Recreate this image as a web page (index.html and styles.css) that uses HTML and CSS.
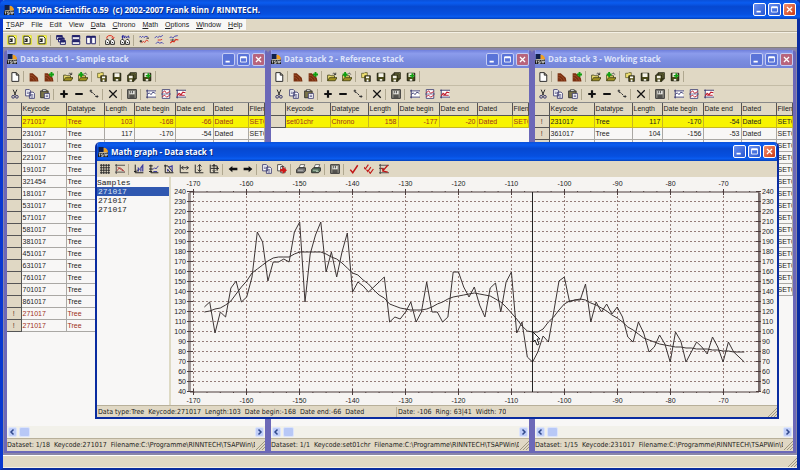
FILE: index.html
```html
<!DOCTYPE html>
<html lang="en">
<head>
<meta charset="UTF-8">
<meta name="viewport" content="width=device-width, initial-scale=1.0">
<title>TSAPWin Scientific 0.59</title>
<link rel="stylesheet" href="styles.css">
</head>
<body>

<!-- ICONS -->
<svg class="sprite" aria-hidden="true">
  <symbol id="i-app" viewBox="0 0 16 16"><path fill="#10204a" d="M1 0h8v8H1z"/><path fill="#f0a020" d="M9 1a7 7 0 0 1 7 7v1H9z"/><path fill="#f4e8c0" d="M2 8h12v2H2z"/><path fill="#181818" d="M0 9h16v7H0z"/><path stroke="#fff" d="M1 11h3M2.5 11v4M8 11H5.500v2H8v2H5M9.500 15v-4H12v4M13.500 15v-4H15v2h-1"  fill="none"/></symbol>
  <symbol id="i-page" viewBox="0 0 16 16"><path fill="#ffff60" stroke="#d8d800" d="M1 1h14v14H1z"/><path fill="#fffff0" stroke="#222" stroke-width="1.5" d="M3 2h7l3 3v9H3z"/><path stroke="#222" stroke-width="2" fill="none" d="M5 6l3 3M8 5v5H4"/></symbol>
  <symbol id="i-cascade" viewBox="0 0 16 16"><g fill="#fff" stroke="#20206a" stroke-width="1.500"><path d="M1 1h9v6H1zM4 5h9v6H4zM7 9h8v6H7z"/></g><path stroke="#20206a" stroke-width="3" d="M1 2h9M4 6h9M7 10h8"/></symbol>
  <symbol id="i-tileh" viewBox="0 0 16 16"><path fill="#fff" stroke="#20206a" stroke-width="1.500" d="M2 1h12v6H2zM2 9h12v6H2z"/><path stroke="#20206a" stroke-width="3" d="M2 2h12M2 10h12"/></symbol>
  <symbol id="i-tilev" viewBox="0 0 16 16"><path fill="#fff" stroke="#20206a" stroke-width="1.500" d="M1 2h6v12H1zM9 2h6v12H9z"/><path stroke="#20206a" stroke-width="3" d="M1 3h14"/></symbol>
  <symbol id="i-find" viewBox="0 0 16 16"><path fill="none" stroke="#e03020" stroke-width="1.500" d="M3 6V3l3-2h4l3 2v3M11 4l2 2 2-2"/><path fill="#fff" stroke="#222" stroke-width="1.500" d="M1 15V9l2-2h2l2 3v5zM9 15V9l2-2h2l2 3v5z"/><path stroke="#222" stroke-width="1.500" d="M3 11l2 2M11 11l2 2"/></symbol>
  <symbol id="i-findfx" viewBox="0 0 16 16"><path fill="none" stroke="#20209a" stroke-width="1.500" d="M4 6V1h2M2.500 3h4M8 1L7 5M9 2l3 3M12 2L9 5M13.500 1l1 4"/><path fill="#fff" stroke="#222" stroke-width="1.500" d="M1 15V9l2-2h2l2 3v5zM9 15V9l2-2h2l2 3v5z"/><path stroke="#222" stroke-width="1.500" d="M3 11l2 2M11 11l2 2"/></symbol>
  <symbol id="i-curve1" viewBox="0 0 16 16"><path fill="none" stroke="#4040b0" stroke-width="1.500" d="M0 4l2-2 2 2 2-2 2 2 3-2 3 1"/><path fill="none" stroke="#e03020" stroke-width="1.500" d="M4 13l3-3 2 2 3-4 3 2"/><path stroke="#222" stroke-width="1.500" d="M1 10h4M3 8v4M12 5h4"/></symbol>
  <symbol id="i-curve2" viewBox="0 0 16 16"><path fill="none" stroke="#4040b0" stroke-width="1.500" d="M1 5l3-3 2 2 3-2 2 1 3-3M3 14l3-3 3 2 4-1 2 2"/><path stroke="#e03020" stroke-width="1.500" fill="none" d="M6 8h4l3-1"/></symbol>
  <symbol id="i-curve3" viewBox="0 0 16 16"><path fill="none" stroke="#4040b0" stroke-width="1.500" d="M1 4l3-1 2 2 3-3 5-1"/><path fill="none" stroke="#e03020" stroke-width="1.800" d="M2 13l3-3 3 1 3-4 4 1"/><path stroke="#222" d="M2 8h7M6 6v4"/></symbol>
  <symbol id="i-new" viewBox="0 0 16 16"><path fill="#fff" stroke="#222" stroke-width="1.500" d="M3 1h7l4 4v10H3zM10 1v4h4"/></symbol>
  <symbol id="i-wood" viewBox="0 0 16 16"><path fill="#7a3010" d="M1 2h5l8 7 1 5v1H1z"/><path fill="none" stroke="#b06038" d="M2 5c5 0 9 4 10 9M2 9c3 0 5 2 6 5"/></symbol>
  <symbol id="i-woodadd" viewBox="0 0 16 16"><path fill="#7a3010" d="M1 2h5l8 7 1 5v1H1z"/><path fill="none" stroke="#b06038" d="M2 5c5 0 9 4 10 9M2 9c3 0 5 2 6 5"/><path stroke="#10a010" stroke-width="3" d="M8 4h8M12 0v8"/></symbol>
  <symbol id="i-open" viewBox="0 0 16 16"><path fill="#f0e070" stroke="#33330a" stroke-width="1.200" d="M1 14V5h4l1 1h6v3"/><path fill="#a09020" stroke="#33330a" stroke-width="1.200" d="M1 14l3-5h12l-3 5z"/><path fill="none" stroke="#222" stroke-width="1.200" d="M9 3c2-2 3-1 5 1M14 1v3h-3"/></symbol>
  <symbol id="i-openadd" viewBox="0 0 16 16"><path fill="#f0e070" stroke="#33330a" stroke-width="1.200" d="M1 14V5h4l1 1h6v3"/><path fill="#a09020" stroke="#33330a" stroke-width="1.200" d="M1 14l3-5h12l-3 5z"/><path stroke="#10a010" stroke-width="3" d="M1 4h8M5 0v8"/><path fill="none" stroke="#222" stroke-width="1.200" d="M10 3c2-2 3-1 4 1"/></symbol>
  <symbol id="i-opensave" viewBox="0 0 16 16"><path fill="#f0e070" stroke="#444410" d="M1 9V2h4l1-1h4v8z"/><path fill="#555010" stroke="#222" stroke-width="1.200" d="M6 6h9v9H6z"/><path fill="#fff" d="M8 7h5v3H8zM9 12h3v3H9z"/></symbol>
  <symbol id="i-save" viewBox="0 0 16 16"><path fill="#4a4a18" stroke="#181808" stroke-width="1.500" d="M2 2h12v12H2z"/><path fill="#f4f2e8" d="M4 2h8v6H4zM6 11h4v3H6z"/></symbol>
  <symbol id="i-saveall" viewBox="0 0 16 16"><path fill="#8a8a50" stroke="#181808" stroke-width="1.200" d="M5 1h10v10H5zM3 3h10v10H3z"/><path fill="#4a4a18" stroke="#181808" stroke-width="1.200" d="M1 5h10v10H1z"/><path fill="#f4f2e8" d="M3 6h6v4H3zM4 12h4v3H4z"/></symbol>
  <symbol id="i-saveadd" viewBox="0 0 16 16"><path fill="#4a4a18" stroke="#181808" stroke-width="1.500" d="M2 2h12v12H2z"/><path fill="#f4f2e8" d="M4 2h8v6H4zM6 11h4v3H6z"/><path stroke="#10a010" stroke-width="2.500" d="M6 6h8M10 2v8"/></symbol>
  <symbol id="i-cut" viewBox="0 0 16 16"><path fill="none" stroke="#222" stroke-width="1.500" d="M5 1l4 9M11 1L7 10"/><g fill="none" stroke="#30306a" stroke-width="1.500"><circle cx="5" cy="12.500" r="2.200"/><circle cx="11" cy="12.500" r="2.200"/></g></symbol>
  <symbol id="i-copy" viewBox="0 0 16 16"><path fill="#fff" stroke="#30306a" stroke-width="1.300" d="M1 1h6l2 2v8H1zM7 5h6l2 2v8H7z"/><path stroke="#30306a" d="M3 5h3M3 7h3M9 9h4M9 11h4M9 13h4"/></symbol>
  <symbol id="i-paste" viewBox="0 0 16 16"><path fill="#7a7448" stroke="#222" stroke-width="1.300" d="M1 3h12v11H1z"/><path fill="#ddd" stroke="#222" d="M4 1h6v3H4z"/><path fill="#fff" stroke="#30306a" stroke-width="1.200" d="M7 7h8v8H7z"/><path stroke="#30306a" d="M9 10h4M9 12h4"/></symbol>
  <symbol id="i-plus" viewBox="0 0 16 16"><path stroke="#111" stroke-width="3.500" d="M2 8h12M8 2v12"/></symbol>
  <symbol id="i-minus" viewBox="0 0 16 16"><path stroke="#111" stroke-width="3.500" d="M2 8h12"/></symbol>
  <symbol id="i-scatter" viewBox="0 0 16 16"><path fill="none" stroke="#333" stroke-width="1.600" d="M1 3h4M3 1v4l3 1M7 7l3 3M10 12h5M13 10v4"/></symbol>
  <symbol id="i-del" viewBox="0 0 16 16"><path stroke="#111" stroke-width="2" d="M2 2l12 12M14 2L2 14"/></symbol>
  <symbol id="i-report" viewBox="0 0 16 16"><path fill="#8a8880" stroke="#333" stroke-width="1.500" d="M1 1h14v14H1z"/><path fill="#f4f4f0" d="M4 3h8v5H4z"/><path stroke="#222" stroke-width="1.300" d="M6 3v4M9 3v4M4 11h8M4 13h8"/></symbol>
  <symbol id="i-graph1" viewBox="0 0 16 16"><path fill="#fff" stroke="none" d="M2 2h13v12H2z"/><path fill="none" stroke="#30306a" stroke-width="1.400" d="M2 1v14M0 3h16M0 13h16M2 9l3-3 3 3 3-4 4 2"/></symbol>
  <symbol id="i-graph2" viewBox="0 0 16 16"><path fill="#fff" stroke="#30306a" stroke-width="1.300" d="M2 1h12v14H2z"/><path fill="none" stroke="#c02030" stroke-width="1.500" d="M2 6l4-3 3 4 5-3M2 12l4-2 3 3 5-3"/><path stroke="#30306a" d="M0 8h16"/></symbol>
  <symbol id="i-graph3" viewBox="0 0 16 16"><path fill="#fff" d="M2 2h13v12H2z"/><path fill="none" stroke="#30306a" stroke-width="1.400" d="M2 1v14M0 2h16M0 13h16"/><path fill="none" stroke="#c02030" stroke-width="1.800" d="M2 11l3-4 3 2 3-4 4 1M5 10h9"/></symbol>
  <symbol id="i-grid" viewBox="0 0 16 16"><path stroke="#222" stroke-width="1.400" d="M2 0v16M6 0v16M10 0v16M14 0v16M0 2h16M0 6h16M0 10h16M0 14h16"/></symbol>
  <symbol id="i-cross" viewBox="0 0 16 16"><path stroke="#444" stroke-width="1.400" d="M2 0v16M0 2h16M0 13h16"/><path fill="none" stroke="#b04040" stroke-width="1.500" d="M3 11l4-5 3 1 5 5M4 5l9 6"/></symbol>
  <symbol id="i-bar1" viewBox="0 0 16 16"><path fill="none" stroke="#222" stroke-width="1.600" d="M2 1v13h13M0 12h4M5 12V9"/><path fill="none" stroke="#4040a0" stroke-width="2" d="M7 12V7l2 2M11 12V6l3-4v10"/></symbol>
  <symbol id="i-bar2" viewBox="0 0 16 16"><path fill="none" stroke="#222" stroke-width="1.600" d="M3 1v13h12M0 3h6M0 8h6M0 12h5"/><path fill="none" stroke="#4040a0" stroke-width="1.600" d="M6 9l3-3 2 2 4-5M7 12h6"/></symbol>
  <symbol id="i-bar3" viewBox="0 0 16 16"><path fill="none" stroke="#222" stroke-width="1.600" d="M2 1v13h13M0 3h6l8 10M5 8l5 5"/><path fill="none" stroke="#4040a0" stroke-width="2" d="M8 5l5-2v9M6 12V8"/></symbol>
  <symbol id="i-width" viewBox="0 0 16 16"><path fill="none" stroke="#222" stroke-width="1.500" d="M2 1v13h13M4 6h11M7 3L4 6l3 3M12 3l3 3-3 3"/></symbol>
  <symbol id="i-height" viewBox="0 0 16 16"><path fill="none" stroke="#222" stroke-width="1.500" d="M2 1v13h13M9 1v11M6 4l3-3 3 3M6 9l3 3 3-3"/></symbol>
  <symbol id="i-move" viewBox="0 0 16 16"><path fill="none" stroke="#222" stroke-width="1.500" d="M2 1v13h13M8 0v14M3 7h12M6 3l2-2 2 2M13 5l2 2-2 2M6 10l2 2 2-2M4 3h9v8"/></symbol>
  <symbol id="i-left" viewBox="0 0 16 16"><path fill="#111" d="M1 8l6-5v3h8v4H7v3z"/></symbol>
  <symbol id="i-right" viewBox="0 0 16 16"><path fill="#111" d="M15 8L9 3v3H1v4h8v3z"/></symbol>
  <symbol id="i-export" viewBox="0 0 16 16"><path fill="#fff" stroke="#333" stroke-width="1.300" d="M1 1h6l2 2v8H1zM6 4h5l2 2v8H6z"/><path fill="#d01818" d="M5 8h4V4l7 6-7 6v-4H5z"/></symbol>
  <symbol id="i-print" viewBox="0 0 16 16"><path fill="#fff" stroke="#222" d="M5 6l2-5h7l-2 5z"/><path fill="#777" stroke="#222" stroke-width="1.400" d="M1 9l3-3h11v5l-3 3H1z"/><path stroke="#ddd" d="M3 10h8"/></symbol>
  <symbol id="i-print2" viewBox="0 0 16 16"><path fill="#fff" stroke="#222" d="M5 6l2-5h7l-2 5z"/><path fill="#57705c" stroke="#222" stroke-width="1.400" d="M1 9l3-3h11v5l-3 3H1z"/><path stroke="#e0f0e0" d="M3 10h8M8 12h4"/></symbol>
  <symbol id="i-check" viewBox="0 0 16 16"><path fill="none" stroke="#c01818" stroke-width="2.400" d="M2 9l4 5 8-12"/></symbol>
  <symbol id="i-checks" viewBox="0 0 16 16"><path fill="none" stroke="#c01818" stroke-width="1.800" d="M0 5l2 3 5-7M4 9l2 3 5-7M8 12l2 3 5-7"/></symbol>
  <symbol id="i-checkgraph" viewBox="0 0 16 16"><path fill="none" stroke="#444" stroke-width="1.400" d="M2 0v16M0 2h16M0 7h8M0 14h16"/><path fill="none" stroke="#c01818" stroke-width="2" d="M4 6l3 4 7-8M5 11l9 2"/></symbol>
  <symbol id="i-min" viewBox="0 0 13 13"><path fill="#fff" d="M3 8h5v2H3z"/></symbol>
  <symbol id="i-max" viewBox="0 0 13 13"><path fill="none" stroke="#fff" d="M3 3.500h7v6H3z"/><path fill="#fff" d="M3 3h7v2H3z"/></symbol>
  <symbol id="i-close" viewBox="0 0 13 13"><path stroke="#fff" stroke-width="1.500" d="M3.500 3.500l6 6M9.500 3.500l-6 6"/></symbol>
  <symbol id="i-grip" viewBox="0 0 10 10"><path stroke="#a09880" d="M1 10l9-9M4 10l6-6M7 10l3-3"/></symbol>
</svg>

<div class="app">
  <header class="titlebar">
    <svg class="icon"><use href="#i-app"/></svg>
    <h1>TSAPWin Scientific 0.59  (c) 2002-2007 Frank Rinn / RINNTECH.</h1>
    <div class="win-btns">
      <button aria-label="Minimize"><svg><use href="#i-min"/></svg></button>
      <button aria-label="Maximize"><svg><use href="#i-max"/></svg></button>
      <button class="close" aria-label="Close"><svg><use href="#i-close"/></svg></button>
    </div>
  </header>

  <div class="menubar">
    <nav>
      <button><u>T</u>SAP</button>
      <button>File</button>
      <button>Edit</button>
      <button>View</button>
      <button><u>D</u>ata</button>
      <button><u>C</u>hrono</button>
      <button><u>M</u>ath</button>
      <button><u>O</u>ptions</button>
      <button><u>W</u>indow</button>
      <button><u>H</u>elp</button>
    </nav>
  </div>

  <div class="toolbar main-tools" data-icons="page page page | cascade tileh tilev | find findfx | curve1 curve2 curve3"></div>

  <main class="mdi">
    <div class="stacks" id="stacks"></div>

    <!-- MATH GRAPH -->
    <section class="graph">
      <header class="titlebar">
        <svg class="icon"><use href="#i-app"/></svg>
        <h2>Math graph - Data stack 1</h2>
        <div class="win-btns">
          <button aria-label="Minimize"><svg><use href="#i-min"/></svg></button>
          <button aria-label="Maximize"><svg><use href="#i-max"/></svg></button>
          <button class="close" aria-label="Close"><svg><use href="#i-close"/></svg></button>
        </div>
      </header>
      <div class="toolbar" data-icons="grid cross | bar1 bar2 bar3 width height move | left right | copy export | print print2 | report | check checks checkgraph"></div>
      <div class="graph-body">
        <div class="samples">
          <h3>Samples</h3>
          <ul role="listbox" aria-label="Samples">
            <li role="option" aria-selected="true" class="active">271017</li>
            <li role="option" aria-selected="false">271017</li>
            <li role="option" aria-selected="false">271017</li>
          </ul>
        </div>
        <svg class="chart" id="chart" viewBox="0 0 606 228"></svg>
      </div>
      <footer class="statusbar">
        <span class="status-data">Data type:Tree  Keycode:271017  Length:103  Date begin:-168  Date end:-66  Dated</span>
        <span class="status-pos">Date: -106  Ring: 63|41  Width: 70</span>
        <svg class="grip"><use href="#i-grip"/></svg>
      </footer>
    </section>
  </main>

  <footer class="app-status"><svg class="grip"><use href="#i-grip"/></svg></footer>
</div>

<script src="script.js"></script>
</body>
</html>
```

FILE: styles.css
```css
:root { --beige:#e0d8c4; --blue-dark:#0a2ca0; --child-border:#6c68b8; --paper:#f8f7f6; --ui:'DejaVu Sans Condensed','Liberation Sans',sans-serif; --cell:'Liberation Sans',sans-serif; }
* { margin:0; padding:0; box-sizing:border-box; }
body { font-family:var(--ui); font-size:7px; color:#222; background:var(--blue-dark); }
button { font:inherit; color:inherit; background:none; border:none; }
.sprite { display:none; }
.icon { width:10px; height:10px; display:block; flex:none; }

/* MAIN WINDOW */
.app { min-height:100vh; display:flex; flex-direction:column; border:3px solid var(--blue-dark); border-top:none; border-bottom-width:2px; border-left-color:#0838d0; background:var(--beige); }
.titlebar { display:flex; align-items:center; gap:3px; height:19px; padding:0 1px; background:linear-gradient(#0a50d8,#0a5cf0 15%,#0648d0 35%,#0650e0 75%,#0a5cf0 88%,#0440b8); color:#fff; }
.titlebar h1,.titlebar h2 { flex:1; font-family:'Open Sans',sans-serif; font-weight:700; font-size:8px; line-height:12px; white-space:pre; overflow:hidden; text-shadow:1px 1px 0 #0a2a80; }
.win-btns { display:flex; gap:2px; }
.win-btns button { width:13px; height:13px; border:1px solid #fff; border-radius:2px; background:linear-gradient(135deg,#6a90f0,#2455d0); }
.win-btns svg { display:block; width:11px; height:11px; }
.win-btns .close { background:linear-gradient(135deg,#f09070,#cc3a14); }
.app > .titlebar { margin:0 -3px; padding:0 4px; border-radius:5px 5px 0 0; }

.menubar { height:13px; border-bottom:1px solid #b4ac98; }
.menubar nav { display:inline-flex; gap:1px; height:11px; background:var(--paper); padding-right:1px; font-family:var(--cell); }
.menubar button { padding:0 3px; line-height:11px; }

.toolbar { display:flex; align-items:center; height:17px; background:var(--beige); }
.toolbar button { width:15px; height:15px; display:flex; align-items:center; justify-content:center; }
.toolbar .sep { width:1px; height:11px; margin:0 2px 0 1px; background:#b0a890; }
.main-tools { height:15px; padding-left:1px; border-top:1px solid #f4f0e4; }

.mdi { flex:1; display:flex; position:relative; border-top:1px solid #85817c; background:#8a86a8; padding:2px 1px; }
.stacks { flex:1; min-width:0; display:flex; }
.app-status { display:flex; justify-content:flex-end; align-items:flex-end; height:13px; border-top:1px solid #fff; border-bottom:1px solid #f4f0e4; }
.grip { width:10px; height:10px; display:block; flex:none; margin-left:auto; }

/* DATA STACKS */
.stack { flex:1 1 0; min-width:0; display:flex; flex-direction:column; border:3px solid var(--child-border); border-top:none; border-bottom-width:2px; border-radius:4px 4px 0 0; background:var(--paper); overflow:hidden; }
.stack .titlebar { height:18px; margin:0 -3px; padding:0 3px; background:linear-gradient(#7080dc,#8c9cec 20%,#7a8cdf 60%,#7484d8); color:#dde3fa; }
.stack .titlebar h2 { text-shadow:none; }
.stack .win-btns button { border-color:#c4ccf4; background:#5a74d8; }
.stack .win-btns .close { background:#b8647c; }
.stack .toolbar + .toolbar { border-top:1px solid #c4bca6; }
.table-wrap { flex:1; overflow:hidden; border-top:1px solid #888; }
.data-table { width:100%; border-collapse:collapse; table-layout:fixed; font-family:var(--cell); font-size:7px; line-height:11px; }
.data-table th,.data-table td { height:12px; border:1px solid #aaa8a4; border-left:none; border-top:none; padding:0 1px; text-align:left; font-weight:400; white-space:nowrap; overflow:hidden; }
.data-table th { background:var(--beige); border-color:#555; color:#222; }
.data-table td.mark { background:var(--beige); border-color:#555; text-align:center; color:#5a3018; }
.data-table td.num { text-align:right; }
.data-table tr.sel td:not(.mark) { background:#f8f400; border-color:#c8b820; }
.data-table tr.red td:not(.mark) { color:#a03020; }
.c-mark { width:14px; }
.c-key { width:45px; }
.c-type { width:38px; }
.c-len { width:30px; }
.c-begin { width:41px; }
.c-end { width:38px; }
.c-dated { width:35px; }

.scroll { display:flex; align-items:center; gap:2px; height:12px; padding:0 1px; background:#f2f1ea; }
.scroll button { width:9px; height:10px; border:1px solid #dce4fc; border-radius:2px; background:#c0cef8; }
.scroll button svg { display:block; width:7px; height:8px; }
.scroll .thumb { width:11px; height:10px; border:1px solid #dce4fc; border-radius:2px; background:#b8c8f6; }
.scroll button:last-child { margin-left:auto; }
.statusbar { display:flex; align-items:center; height:13px; border-top:1px solid #b8b09a; background:var(--beige); line-height:10px; white-space:pre; overflow:hidden; }
.statusbar span { overflow:hidden; }
.stack .statusbar span { flex:1; }

/* MATH GRAPH */
.graph { position:absolute; top:94px; left:92px; right:18px; border:2px solid var(--blue-dark); border-top:none; border-radius:5px 5px 0 0; background:var(--paper); overflow:hidden; }
.graph .titlebar { margin:0 -2px; padding:0 3px; }
.graph .toolbar { height:16px; }
.graph-body { display:flex; background:#f6f4f2; }
.samples { width:74px; flex:none; border-right:2px solid #dedac4; background:var(--paper); font-family:'Liberation Mono',monospace; font-size:8px; line-height:9px; padding-top:1px; }
.samples h3 { font-size:8px; font-weight:400; }
.samples ul { list-style:none; }
.samples li { padding-left:1px; }
.samples li.active { background:#3058b0; color:#dce4f4; }
.chart { flex:1; min-width:0; display:block; font-family:var(--cell); font-size:7px; fill:#222; }
.chart .grid { fill:none; stroke:#947c78; stroke-dasharray:2 2; }
.chart .axis { fill:none; stroke:#4c3c3c; }
.chart .line { fill:none; stroke:#3c3434; stroke-width:1; }
.chart .cursor { stroke:#222; }
.chart .pointer { fill:#fff; stroke:#222; }
.graph .statusbar { height:12px; padding-left:1px; }
.status-data { flex:0 0 299px; border-right:1px solid #b8b09a; margin-right:1px; }
```

FILE: script.js
```js
// toolbars
function tools(icons) {
  return icons.split(' ').map(n => n === '|'
    ? '<span class="sep"></span>'
    : `<button aria-label="${n}"><svg class="icon"><use href="#i-${n}"/></svg></button>`).join('');
}
document.querySelectorAll('[data-icons]').forEach(t => t.innerHTML = tools(t.dataset.icons));

// data stacks: mark, keycode, type, length, begin, end, class
const tree = (key, cls = '', mark = '') => [mark, key, 'Tree', '', '', '', cls];
const stacks = [
  { title: 'Data stack 1 - Sample stack', status: 'Dataset: 1/18  Keycode:271017', rows: [
    ['', '271017', 'Tree', 103, -168, -66, 'sel red'],
    ['', '231017', 'Tree', 117, -170, -54, ''],
    ...['361017', '221017', '191017', '321454', '181017', '531017', '571017', '581017', '381017',
      '451017', '631017', '761017', '701017', '861017'].map(k => tree(k)),
    tree('271017', 'red', '!'), tree('271017', 'red', '!')
  ] },
  { title: 'Data stack 2 - Reference stack', status: 'Dataset: 1/1  Keycode:set01chr', rows: [
    ['', 'set01chr', 'Chrono', 158, -177, -20, 'sel red']
  ] },
  { title: 'Data stack 3 - Working stack', status: 'Dataset: 1/15  Keycode:231017', rows: [
    ['!', '231017', 'Tree', 117, -170, -54, 'sel'],
    ['!', '361017', 'Tree', 104, -156, -53, ''],
    ...['221017', '191017', '321454', '181017', '531017', '571017', '581017', '381017',
      '451017', '631017', '761017', '701017', '861017'].map(k => tree(k, '', '!'))
  ] }
];

const arrow = d => `<svg viewBox="0 0 7 8"><path d="${d}" fill="none" stroke="#30488c" stroke-width="1.5"/></svg>`;

document.getElementById('stacks').innerHTML = stacks.map(s => `
  <section class="stack">
    <header class="titlebar">
      <svg class="icon"><use href="#i-app"/></svg>
      <h2>${s.title}</h2>
      <div class="win-btns">
        <button aria-label="Minimize"><svg><use href="#i-min"/></svg></button>
        <button aria-label="Maximize"><svg><use href="#i-max"/></svg></button>
        <button class="close" aria-label="Close"><svg><use href="#i-close"/></svg></button>
      </div>
    </header>
    <div class="toolbar">${tools('new | wood woodadd | open openadd | opensave save saveall saveadd |')}</div>
    <div class="toolbar">${tools('cut copy paste | plus minus scatter | del | report | graph1 graph2 graph3')}</div>
    <div class="table-wrap">
      <table class="data-table">
        <thead><tr>
          <th class="c-mark"></th><th class="c-key">Keycode</th><th class="c-type">Datatype</th><th class="c-len">Length</th>
          <th class="c-begin">Date begin</th><th class="c-end">Date end</th><th class="c-dated">Dated</th><th>Filename</th>
        </tr></thead>
        <tbody>${s.rows.map(([m, k, t, len, b, e, cls]) => `<tr class="${cls}">
          <td class="mark">${m}</td><td>${k}</td><td>${t}</td><td class="num">${len}</td>
          <td class="num">${b}</td><td class="num">${e}</td><td>${len ? 'Dated' : ''}</td><td>SET01.FH</td></tr>`).join('')}
        </tbody>
      </table>
    </div>
    <div class="scroll">
      <button aria-label="Scroll left">${arrow('M4.5 1.5L2 4l2.500 2.500')}</button><span class="thumb"></span>
      <button aria-label="Scroll right">${arrow('M2.500 1.500L5 4 2.500 6.500')}</button>
    </div>
    <footer class="statusbar"><span>${s.status}  Filename:C:\\Programme\\RINNTECH\\TSAPWin\\Demo</span><svg class="grip"><use href="#i-grip"/></svg></footer>
  </section>`).join('');

// chart, one value per year from -168 to -66
const rings = [125,130,99,120,115,144,151,130,135,155,200,190,151,170,170,173,170,200,210,130,178,197,210,160,180,155,180,199,
  140,150,146,140,145,150,155,110,115,113,120,130,110,120,150,120,120,110,115,160,160,145,135,145,127,115,144,149,120,150,160,
  99,110,75,70,80,96,90,120,151,155,130,132,132,148,110,130,120,128,118,125,115,95,90,110,99,80,85,97,88,70,100,91,70,80,90,85,
  78,95,85,70,90,80,75,70];
const trend = [120,121,123,124,127,131,138,145,151,159,163,167,171,174,175,175,175,178,180,180,180,180,180,178,175,173,169,164,
  159,157,152,148,142,137,134,128,126,124,123,122,122,122,123,125,128,130,133,135,136,137,138,139,138,137,136,133,130,125,119,
  113,106,101,100,100,103,110,115,122,128,131,132,133,132,129,127,124,121,117,114,110,105,102,98,94,92,90,88,87,86,85,85,84,84,
  83,83,83,82,82,81,81,80,80,80];

const X0 = 19, X1 = 588, Y0 = 15, Y1 = 215;
const px = year => 22.8 + (year + 170) * 5.293;
const py = v => Y0 + 240 - v;
const path = data => 'M' + data.map((v, i) => px(i - 168).toFixed(1) + ' ' + py(v)).join('L');

let grid = '', axis = `M${X0} ${Y0}H${X1}V${Y1}H${X0}z`, labels = '';
for (let y = -170; y <= -70; y += 10) {
  const x = Math.floor(px(y)) + 0.5;
  grid += `M${x} ${Y0}V${Y1}`;
  axis += `M${x} ${Y0 - 3}v6M${x} ${Y1 - 3}v6`;
  labels += `<text x="${x}" y="9" text-anchor="middle">${y}</text><text x="${x}" y="226" text-anchor="middle">${y}</text>`;
}
for (let y = -170; y < -64; y += 2.5) axis += `M${px(y).toFixed(1)} ${Y0 - 1}v1M${px(y).toFixed(1)} ${Y1}v1`;
for (let v = 40; v <= 240; v += 10) {
  if (v > 40 && v < 240) grid += `M${X0} ${py(v) - 0.5}H${X1}`;
  axis += `M${X0 - 3} ${py(v) - 0.5}h6M${X1 - 3} ${py(v) - 0.5}h5`;
  labels += `<text x="15" y="${py(v) + 2}" text-anchor="end">${v}</text><text x="591" y="${py(v) + 2}">${v}</text>`;
}
for (let v = 42; v < 240; v += 2) axis += `M${X0 - 1} ${py(v)}h-1M${X1 - 1} ${py(v)}h3`;

document.getElementById('chart').innerHTML = `
  <path class="grid" d="${grid}"/><path class="axis" d="${axis}"/>
  <path class="line" d="${path(trend)}"/><path class="line" d="${path(rings)}"/>
  <path class="cursor" d="M361.500 ${Y0}V${Y1}"/>
  <path class="pointer" d="M362 155v10l2-2 2 5 2-1-2-5h3z"/>${labels}`;
```
